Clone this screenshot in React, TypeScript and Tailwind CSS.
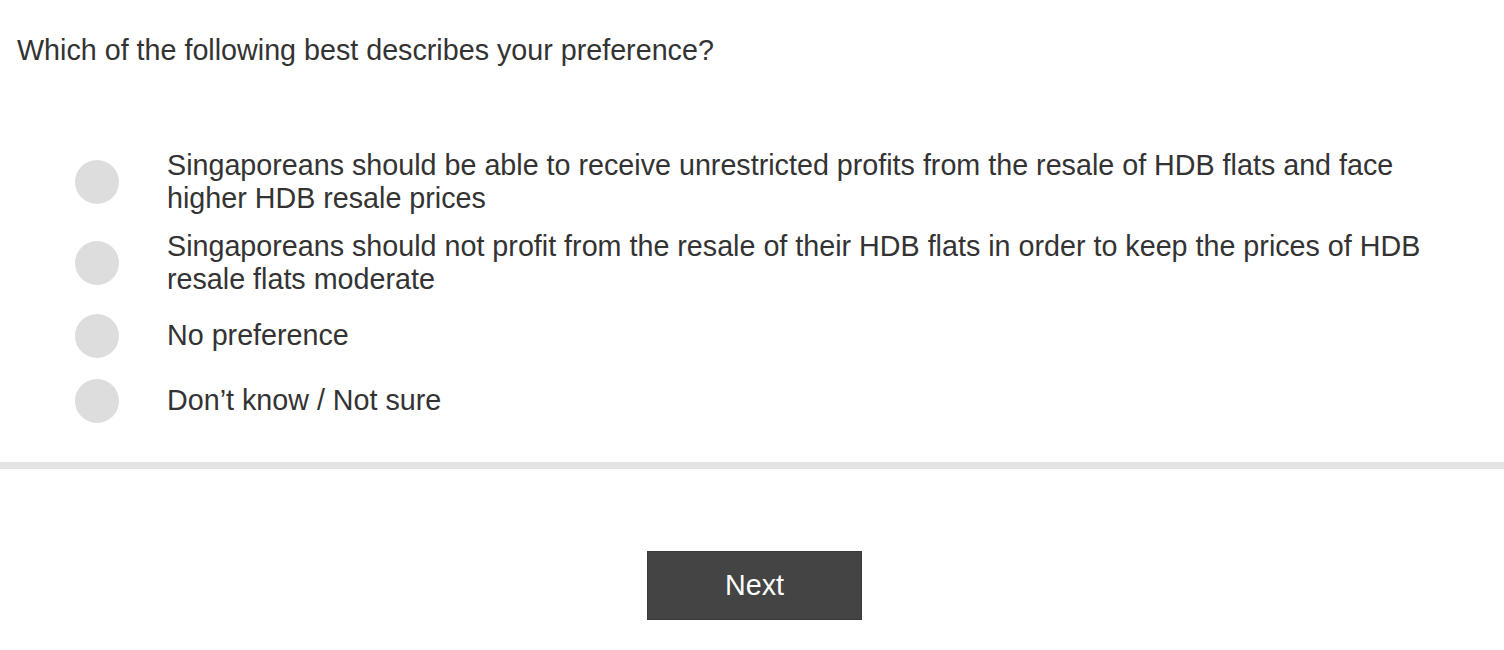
import React from "react";

const options = [
  "Singaporeans should be able to receive unrestricted profits from the resale of HDB flats and face higher HDB resale prices",
  "Singaporeans should not profit from the resale of their HDB flats in order to keep the prices of HDB resale flats moderate",
  "No preference",
  "Don\u2019t know / Not sure",
];

export default function App() {
  return (
    <div
      className="w-[1504px] h-[650px] bg-white text-[#333333] overflow-hidden"
      style={{ fontFamily: '"Liberation Sans", Arial, sans-serif' }}
    >
      <div className="pt-[34px] pl-[17px] text-[28.7px] leading-[33px]">
        Which of the following best describes your preference?
      </div>
      <div className="mt-[74px] flex flex-col">
        {options.map((o, i) => (
          <label
            key={i}
            className="flex items-center py-[7.5px] pl-[75px] pr-[60px] cursor-pointer"
          >
            <div className="w-[92px] shrink-0 flex items-center h-[50px]">
              <span className="block w-[44px] h-[44px] rounded-full bg-[#dddddd]" />
            </div>
            <span className="text-[28.7px] leading-[33px] pr-[20px]">{o}</span>
          </label>
        ))}
      </div>
      <div className="mt-[29px] h-[7px] bg-[#e4e4e4]" />
      <div className="mt-[82px] flex justify-center pl-[5px]">
        <button className="w-[215px] h-[69px] bg-[#444444] border border-[#3a3a3a] text-white text-[28.7px]">
          Next
        </button>
      </div>
    </div>
  );
}
